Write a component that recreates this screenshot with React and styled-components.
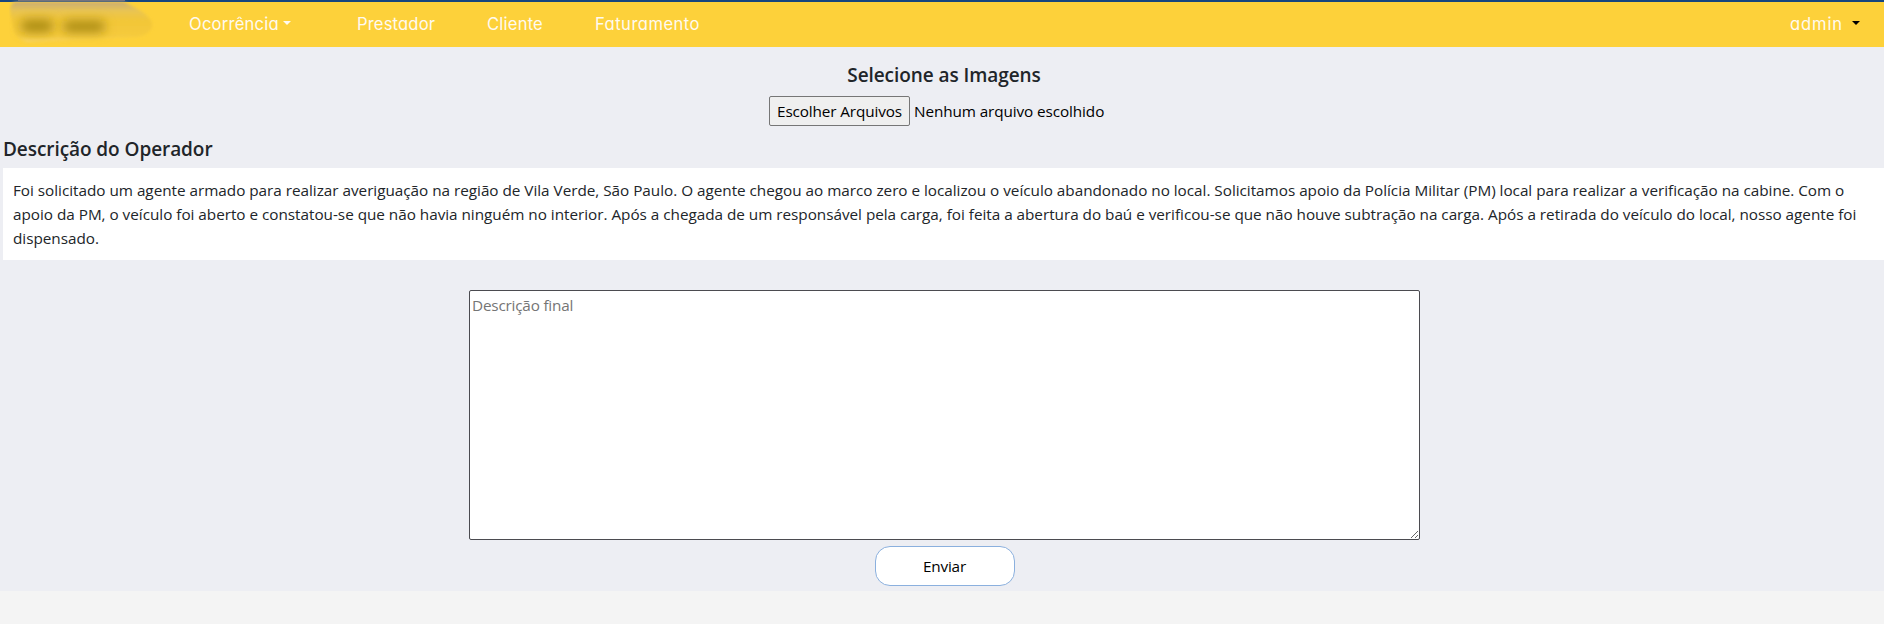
import React from "react";
import styled, { createGlobalStyle } from "styled-components";

const GlobalStyle = createGlobalStyle`
  *, *::before, *::after { box-sizing: border-box; }
  body {
    margin: 0;
    background: #f4f4f4;
    color: #212529;
    font: 400 15.3px/24px "Open Sans", "Noto Sans", sans-serif;
    overflow-x: hidden;
  }
`;

const Navbar = styled.nav`
  display: flex;
  align-items: center;
  height: 47px;
  padding: 0 24px 0 9px;
  border-top: 2px solid #16457e;
  background: #fdd13a;
  font-family: Inter, sans-serif;
  font-size: 16.6px;
  font-feature-settings: "cv11";
`;

const Brand = styled.svg`
  flex: none;
  width: 150px;
  height: 47px;
  margin-top: -2px;
`;

const NavList = styled.div`
  display: flex;
  flex: 1;
  margin-left: 30px;
`;

const NavLink = styled.a`
  display: flex;
  align-items: center;
  flex: none;
  width: ${(p) => p.$width}px;
  margin-top: -2px;
  color: #fffaf0;
  letter-spacing: ${(p) => p.$tracking}px;
  line-height: 24px;
  text-decoration: none;
  white-space: nowrap;
`;

const Caret = styled.span`
  margin: -1px 0 0 ${(p) => p.$gap}px;
  border: 4.5px solid transparent;
  border-top-color: ${(p) => p.$color};
  border-bottom: 0;
`;

const Page = styled.main`
  height: 544px;
  padding: 16px 0 0 3px;
  background: #edeef3;
`;

const Upload = styled.section`
  display: flex;
  flex-direction: column;
  align-items: center;
  padding-left: 1px;
`;

const Heading = styled.h5`
  margin: 0 0 ${(p) => p.$gap}px;
  font-size: 19px;
  font-weight: 600;
  line-height: 24px;
  letter-spacing: -0.07px;
  white-space: nowrap;
`;

const FilePicker = styled.div`
  display: flex;
  align-items: center;
  width: 350px;
  height: 30px;
  color: #000;
`;

const FileButton = styled.button`
  width: 141px;
  height: 30px;
  margin-right: 4px;
  padding: 0 0 1px;
  border: 1px solid #767676;
  border-radius: 2px;
  background: #efefef;
  color: #000;
  font: inherit;
  letter-spacing: -0.12px;
  white-space: nowrap;
`;

const FileStatus = styled.span`
  margin-top: -1px;
  letter-spacing: -0.1px;
  white-space: nowrap;
`;

const OperatorSection = styled.section`
  margin-top: 11px;
`;

const OperatorText = styled.p`
  height: 92px;
  margin: 0;
  padding: 10px;
  background: #fff;
  letter-spacing: -0.025px;
`;

const Line = styled.span`
  display: block;
  white-space: nowrap;
`;

const Form = styled.form`
  display: flex;
  flex-direction: column;
  align-items: center;
  margin-top: 30px;
  padding-left: 2px;
`;

const FinalText = styled.textarea`
  display: block;
  width: 951px;
  height: 250px;
  padding: 2px;
  border: 1px solid #4b4b50;
  border-radius: 2px;
  background: #fff;
  font: inherit;
  letter-spacing: -0.2px;
  &::placeholder { color: #757575; }
`;

const SubmitButton = styled.button`
  width: 140px;
  height: 40px;
  margin-top: 6px;
  padding: 0 0 1px;
  border: 1px solid #8bb0de;
  border-radius: 15px;
  background: #fff;
  color: #000;
  font: inherit;
  letter-spacing: -0.2px;
`;

export default function App() {
  return (
    <>
      <GlobalStyle />
      <Navbar>
        <Brand viewBox="0 0 150 47" aria-hidden="true">
          <defs>
            <filter id="soft" x="-40%" y="-150%" width="180%" height="400%">
              <feGaussianBlur stdDeviation="5.5" />
            </filter>
            <filter id="edge" x="-10%" y="-20%" width="120%" height="140%">
              <feGaussianBlur stdDeviation="1.5" />
            </filter>
            <linearGradient id="patch" x1="0" y1="0" x2="0" y2="1">
              <stop offset="0" stopColor="#c9ab75" />
              <stop offset=".22" stopColor="#e9c552" />
              <stop offset=".45" stopColor="#f2c638" />
              <stop offset=".85" stopColor="#f5ca3c" />
              <stop offset="1" stopColor="#fbd769" />
            </linearGradient>
          </defs>
          <path d="M6 2H115L132 11Q145 20 143 27Q140 35 128 37L18 42Q6 39 4 28L1 11Q1 4 6 2Z" fill="url(#patch)" filter="url(#edge)" />
          <rect x="12" y="20" width="32" height="12" rx="5" fill="#a58718" filter="url(#soft)" />
          <rect x="54" y="21" width="42" height="11" rx="5" fill="#a58718" filter="url(#soft)" />
          <path d="M9 .5H116" stroke="#75737e" />
        </Brand>
        <NavList>
          <NavLink href="#" $width={168} $tracking={0.22}>
            Ocorrência
            <Caret $gap={4} $color="#fffaf0" />
          </NavLink>
          <NavLink href="#" $width={130} $tracking={0.15}>Prestador</NavLink>
          <NavLink href="#" $width={108} $tracking={0.2}>Cliente</NavLink>
          <NavLink href="#" $width={120} $tracking={0.46}>Faturamento</NavLink>
        </NavList>
        <NavLink href="#" $width={70} $tracking={0.85}>
          admin
          <Caret $gap={9} $color="#000" />
        </NavLink>
      </Navbar>
      <Page>
        <Upload>
          <Heading $gap={9}>Selecione as Imagens</Heading>
          <FilePicker>
            <FileButton type="button">Escolher Arquivos</FileButton>
            <FileStatus>Nenhum arquivo escolhido</FileStatus>
          </FilePicker>
        </Upload>
        <OperatorSection>
          <Heading $gap={7}>Descrição do Operador</Heading>
          <OperatorText>
            <Line>Foi solicitado um agente armado para realizar averiguação na região de Vila Verde, São Paulo. O agente chegou ao marco zero e localizou o veículo abandonado no local. Solicitamos apoio da Polícia Militar (PM) local para realizar a verificação na cabine. Com o</Line>
            <Line>apoio da PM, o veículo foi aberto e constatou-se que não havia ninguém no interior. Após a chegada de um responsável pela carga, foi feita a abertura do baú e verificou-se que não houve subtração na carga. Após a retirada do veículo do local, nosso agente foi</Line>
            <Line>dispensado.</Line>
          </OperatorText>
        </OperatorSection>
        <Form onSubmit={(e) => e.preventDefault()}>
          <FinalText placeholder="Descrição final" />
          <SubmitButton type="submit">Enviar</SubmitButton>
        </Form>
      </Page>
    </>
  );
}
